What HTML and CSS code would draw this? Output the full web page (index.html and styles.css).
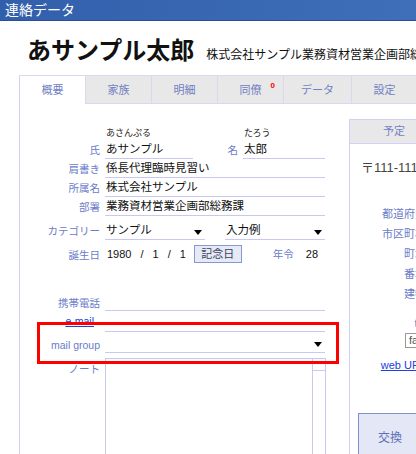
FILE: index.html
```html
<!DOCTYPE html>
<html lang="ja">
<head>
  <meta charset="UTF-8">
  <title>連絡データ</title>
  <link rel="stylesheet" href="styles.css">
</head>
<body>
  <div class="titlebar">連絡データ</div>

  <div class="head">
    <h1>あサンプル太郎</h1>
    <span class="org">株式会社サンプル業務資材営業企画部総務課</span>
  </div>

  <div class="wrap">
    <ul class="tabs">
      <li class="tab active">概要</li>
      <li class="tab">家族</li>
      <li class="tab">明細</li>
      <li class="tab">同僚<span class="badge">0</span></li>
      <li class="tab wide">データ</li>
      <li class="tab">設定</li>
    </ul>

    <div class="panes">
      <div class="main">
        <div class="row reading">
          <span class="lbl"></span>
          <div class="val split">
            <span>あさんぷる</span>
            <span></span>
            <span>たろう</span>
          </div>
        </div>

        <div class="row">
          <span class="lbl">氏</span>
          <div class="val split">
            <span class="line">あサンプル</span>
            <span class="lbl">名</span>
            <span class="line">太郎</span>
          </div>
        </div>
        <div class="row">
          <span class="lbl">肩書き</span>
          <div class="val line">係長代理臨時見習い</div>
        </div>
        <div class="row">
          <span class="lbl">所属名</span>
          <div class="val line">株式会社サンプル</div>
        </div>
        <div class="row">
          <span class="lbl">部署</span>
          <div class="val line">業務資材営業企画部総務課</div>
        </div>

        <div class="row cat">
          <span class="lbl">カテゴリー</span>
          <div class="val pair">
            <span class="line sel">サンプル</span>
            <span class="line sel">入力例</span>
          </div>
        </div>

        <div class="row birth">
          <span class="lbl">誕生日</span>
          <div class="val date">
            <span>1980</span><span>/</span><span>1</span><span>/</span><span>1</span>
            <button class="btn">記念日</button>
            <span class="lbl age">年令</span>
            <span>28</span>
          </div>
        </div>

        <div class="row tall mobile">
          <span class="lbl">携帯電話</span>
          <div class="val line"></div>
        </div>
        <div class="row tall">
          <span class="lbl mail"><a href="#">e-mail</a></span>
          <div class="val line"></div>
        </div>
        <div class="row tall">
          <span class="lbl">mail group</span>
          <div class="val line sel"></div>
        </div>

        <div class="row note-row">
          <span class="lbl">ノート</span>
          <div class="note">
            <div class="note-body"></div>
            <div class="scroll"><div class="arrow"></div></div>
          </div>
        </div>
      </div>

      <aside class="side">
        <div class="side-head">予定</div>
        <div class="side-body">
          <div class="zip">〒111-1111</div>
          <div class="srow">：</div>
          <div class="srow">都道府県</div>
          <div class="srow">市区町村</div>
          <div class="srow">町域</div>
          <div class="srow">番地</div>
          <div class="srow">建物</div>
          <div class="srow tel">tel</div>
          <div class="fax"><span class="box">fax</span></div>
          <div class="srow url"><a href="#">web URL</a></div>
          <div class="swap">交換</div>
        </div>
      </aside>
    </div>
  </div>

  <div class="highlight"></div>
</body>
</html>
```

FILE: styles.css
```css
* {
  box-sizing: border-box;
}

body {
  margin: 0;
  width: 416px;
  height: 454px;
  overflow: hidden;
  position: relative;
  background: #fff;
  color: #111;
  font-family: "Liberation Sans", "Noto Sans CJK JP", sans-serif;
}

.titlebar {
  height: 21px;
  padding-left: 5px;
  background: linear-gradient(to right, #325fab, #3f6fb9);
  border-bottom: 1px solid #2b4f8f;
  color: #fff;
  font-size: 14px;
  line-height: 20px;
}

.head {
  display: flex;
  align-items: baseline;
  height: 54px;
  padding: 15px 0 0 27px;
  white-space: nowrap;
}

.head h1 {
  margin: 0;
  font-size: 24px;
  line-height: 30px;
  font-weight: bold;
}

.head .org {
  margin-left: 12px;
  font-size: 12px;
}

.wrap {
  margin-left: 19px;
}

/* tabs */
.tabs {
  display: flex;
  margin: 0;
  padding: 0;
  list-style: none;
  height: 29px;
  white-space: nowrap;
}

.tab {
  position: relative;
  flex: none;
  width: 66px;
  background: #e8e8e8;
  border: 1px solid #d8d8f2;
  border-left: none;
  color: #7080c4;
  font-size: 11px;
  line-height: 28px;
  text-align: center;
}

.tab.wide {
  width: 68px;
}

.tab.active {
  width: 67px;
  background: #fff;
  border-left: 1px solid #d0d0f8;
  border-bottom: none;
}

.badge {
  position: absolute;
  top: 6px;
  right: 8px;
  color: #f00;
  font-size: 8px;
  font-weight: bold;
  line-height: 8px;
}

.panes {
  display: flex;
  align-items: flex-start;
}

/* main form */
.main {
  flex: none;
  width: 330px;
  height: 360px;
  padding-top: 23px;
  border-left: 1px solid #d0d0f8;
}

.row {
  display: flex;
  height: 19px;
}

.lbl {
  flex: none;
  width: 80px;
  padding-top: 2px;
  color: #6a7cc8;
  font-size: 10.5px;
  line-height: 17px;
  text-align: right;
  white-space: nowrap;
}

.val {
  flex: none;
  width: 220px;
  margin-left: 5px;
  font-size: 11.5px;
  line-height: 18px;
  white-space: nowrap;
}

.line {
  padding-left: 1px;
  border-bottom: 1px solid #c8c8f0;
}

.reading {
  height: 13px;
}

.reading .val {
  font-size: 9px;
  line-height: 13px;
  color: #222;
}

.split {
  display: grid;
  grid-template-columns: 88px 50px 82px;
}

.split .lbl {
  width: auto;
  padding-right: 5px;
}

.reading .split span {
  padding-left: 1px;
}

.cat {
  margin-top: 5px;
}

.pair {
  display: flex;
  gap: 20px;
}

.pair .sel {
  width: 100px;
}

.sel {
  position: relative;
}

.sel::after {
  content: "";
  position: absolute;
  right: 3px;
  top: 9px;
  border-left: 4.5px solid transparent;
  border-right: 4.5px solid transparent;
  border-top: 5px solid #000;
}

.birth {
  height: 20px;
  margin-top: 4px;
}

.birth .lbl {
  padding-top: 3px;
}

.date {
  display: flex;
  align-items: center;
  gap: 9px;
  padding-left: 2px;
  font-size: 11px;
}

.btn {
  width: 48px;
  height: 18px;
  margin: 0 0 0 -1px;
  padding: 0;
  background: #e6eaf6;
  border: 1px solid #8898d0;
  color: #404060;
  font-family: inherit;
  font-size: 11px;
  line-height: 16px;
}

.date .age {
  width: auto;
  margin-left: 22px;
  padding-top: 0;
  padding-right: 3px;
}

.tall {
  height: 21px;
}

.tall .lbl {
  padding-top: 5px;
}

.tall .val {
  height: 21px;
}

.tall .sel::after {
  top: 10px;
}

.mobile {
  margin-top: 26px;
}

.lbl.mail {
  padding-top: 2px;
  padding-right: 6px;
}

.lbl a,
.url a {
  color: #2040e0;
}

.note-row {
  height: 130px;
  margin-top: 5px;
}

.note-row .lbl {
  padding-top: 3px;
}

.note {
  display: flex;
  width: 221px;
  height: 130px;
  margin-left: 5px;
  border: 1px solid #c8c8f0;
}

.note-body {
  flex: 1;
}

.scroll {
  width: 13px;
  border-left: 1px solid #c8c8f0;
}

.scroll .arrow {
  height: 12px;
  border-bottom: 1px solid #c8c8f0;
}

/* right column */
.side {
  flex: none;
  width: 140px;
  margin-top: 15px;
  height: 340px;
  border-left: 1px solid #d0d0f8;
  border-top: 1px solid #d0d0f8;
}

.side-head {
  height: 24px;
  padding-left: 33px;
  background: #e8e8e8;
  border-bottom: 1px solid #d0d0f8;
  color: #7080c4;
  font-size: 11px;
  line-height: 22px;
}

.side-body {
  padding-left: 8px;
}

.zip {
  height: 16px;
  margin-top: 16px;
  padding-left: 3px;
  color: #444;
  font-size: 13px;
  line-height: 16px;
}

.srow {
  width: 68px;
  height: 20px;
  color: #6a7cc8;
  font-size: 11px;
  line-height: 20px;
  text-align: right;
  white-space: nowrap;
}

.zip + .srow {
  margin-top: 8px;
}

.srow.tel {
  margin-top: 9px;
}

.fax {
  height: 15px;
  padding-left: 47px;
}

.fax .box {
  display: block;
  height: 15px;
  padding-left: 3px;
  border: 1px solid #999;
  color: #555;
  font-size: 11px;
  line-height: 13px;
}

.srow.url {
  margin-top: 7px;
}

.swap {
  width: 90px;
  height: 60px;
  margin-top: 38px;
  padding: 17px 0 0 19px;
  background: #e4e8f6;
  border: 1px solid #8090c8;
  color: #6070b8;
  font-size: 12px;
  line-height: 15px;
}

.highlight {
  position: absolute;
  left: 37px;
  top: 322px;
  width: 302px;
  height: 42px;
  border: 3px solid #f00;
}
```
